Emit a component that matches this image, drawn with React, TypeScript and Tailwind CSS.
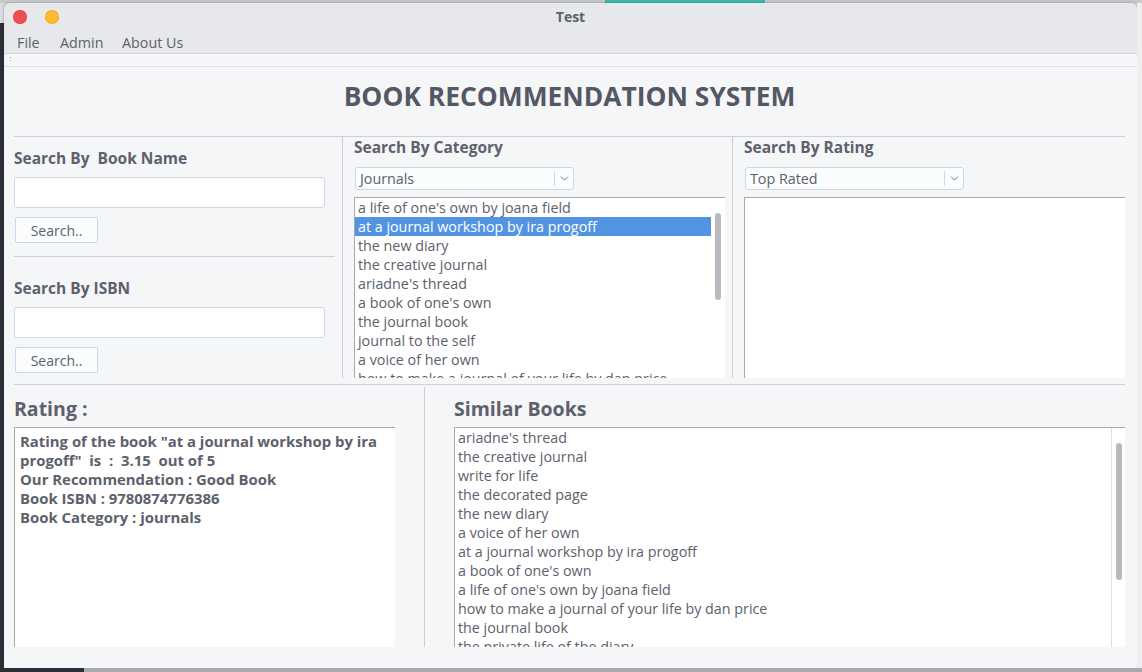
import { ChevronDown } from "lucide-react";

const categoryBooks = [
  "a life of one's own by joana field",
  "at a journal workshop by ira progoff",
  "the new diary",
  "the creative journal",
  "ariadne's thread",
  "a book of one's own",
  "the journal book",
  "journal to the self",
  "a voice of her own",
  "how to make a journal of your life by dan price",
];

const similarBooks = [
  "ariadne's thread",
  "the creative journal",
  "write for life",
  "the decorated page",
  "the new diary",
  "a voice of her own",
  "at a journal workshop by ira progoff",
  "a book of one's own",
  "a life of one's own by joana field",
  "how to make a journal of your life by dan price",
  "the journal book",
  "the private life of the diary",
];

function Heading({ children }: { children: React.ReactNode }) {
  return <div className="text-[15.5px] leading-[20px] font-bold text-[#5c616c] whitespace-pre">{children}</div>;
}

function SearchBox({ label, first }: { label: string; first?: boolean }) {
  return (
    <div className={first ? "flex flex-col pt-[11px]" : "flex flex-col pt-[21px]"}>
      <Heading>{label}</Heading>
      <div className="mt-[9px] h-[31px] w-[311px] rounded-[3px] border border-[#cfd6e6] bg-white" />
      <button className="mt-[9px] ml-[1px] flex h-[26px] w-[83px] items-center justify-center rounded-[2px] border border-[#cfd6e6] bg-[#fbfcfc] text-[14px] text-[#5c616c]">
        Search..
      </button>
    </div>
  );
}

function Combo({ value }: { value: string }) {
  return (
    <div className="mt-[10px] ml-[1px] flex h-[23px] w-[219px] items-center rounded-[3px] border border-[#cfd6e6] bg-[#fbfcfc]">
      <span className="flex-1 pl-[4px] pt-[1px] text-[14.3px] leading-[20px] text-[#5c616c]">{value}</span>
      <div className="h-[15px] w-px bg-[#cfd6e6]" />
      <div className="flex w-[18px] items-center justify-center">
        <ChevronDown size={13} strokeWidth={1.6} className="text-[#5c616c]" />
      </div>
    </div>
  );
}

function Scrollbar({ height, line }: { height: number; line?: boolean }) {
  return (
    <div className={line ? "flex w-[14px] justify-center border-l border-[#dedfe2] pt-[15px]" : "flex w-[14px] justify-center pt-[15px]"}>
      <div className="w-[6px] rounded-full bg-[#b8babf]" style={{ height }} />
    </div>
  );
}

function App() {
  return (
    <div className="flex h-[672px] w-[1142px] flex-col overflow-hidden bg-[#d0d1d3] font-['Open_Sans',sans-serif]">
      {/* desktop strip above the window */}
      <div className="flex h-[3px]">
        <div className="w-[605px] bg-[#c9cacc]" />
        <div className="w-[160px] bg-[#3dbcab]" />
        <div className="flex-1 bg-[#c9cacc]" />
      </div>

      <div className="flex h-[665px]">
        <div className="flex w-[4px] flex-col">
          <div className="h-[20px] bg-[#dcdde0]" />
          <div className="flex-1 bg-[#2c2f38]" />
        </div>

        {/* window */}
        <div className="flex w-[1133px] flex-col overflow-hidden rounded-t-[6px] shadow-[0_0_3px_rgba(0,0,0,0.35)]">
          <div className="grid h-[28px] grid-cols-[1fr_auto_1fr] items-center bg-[#e7e8eb]">
            <div className="flex items-center gap-[18px] pl-[9px]">
              <div className="h-[14px] w-[14px] rounded-full bg-[#ef4e56] shadow-[inset_0_0_0_1px_rgba(200,40,50,0.35)]" />
              <div className="h-[14px] w-[14px] rounded-full bg-[#fbbd2e] shadow-[inset_0_0_0_1px_rgba(210,150,20,0.35)]" />
            </div>
            <div className="pb-[2px] text-[14px] font-bold text-[#5c616c]">Test</div>
            <div />
          </div>
          <div className="flex h-[23px] items-center border-b border-[#d3d4d8] bg-[#e7e8eb] pl-[13px] pt-[2px] text-[14.3px] text-[#5c616c]">
            <span className="w-[43px]">File</span>
            <span className="w-[62px]">Admin</span>
            <span>About Us</span>
          </div>
          <div className="flex h-[13px] flex-col gap-[2px] border-b border-[#dfe0e3] bg-[#f5f6f7] pl-[6px] pt-[3px]">
            <div className="h-px w-px bg-[#a8aab0]" />
            <div className="h-px w-px bg-[#a8aab0]" />
          </div>

          {/* content */}
          <div className="flex flex-1 flex-col bg-[#f5f6f7] pl-[10px] pr-[12px]">
            <div className="flex h-[69px] items-center justify-center pb-[9px] text-[26.4px] font-bold text-[#545864]">
              BOOK RECOMMENDATION SYSTEM
            </div>
            <div className="h-px bg-[#cfd0d3]" />

            <div className="flex h-[241px] overflow-hidden">
              <div className="flex w-[321px] flex-col">
                <SearchBox label="Search By  Book Name" first />
                <div className="mt-[13px] h-px bg-[#cfd0d3]" />
                <SearchBox label="Search By ISBN" />
              </div>
              <div className="ml-[7px] w-px bg-[#cdced2]" />

              <div className="ml-[11px] flex w-[371px] flex-col">
                <Heading>Search By Category</Heading>
                <Combo value="Journals" />
                <div className="mt-[7px] flex flex-1 border-t border-l border-[#a8a9ad] bg-white">
                  <div className="flex-1 text-[14.3px] leading-[19px] text-[#5c616c]">
                    {categoryBooks.map((b, i) => (
                      <div key={b} className={i === 1 ? "whitespace-nowrap bg-[#5294e2] pl-[3px] text-white" : "whitespace-nowrap pl-[3px]"}>
                        {b}
                      </div>
                    ))}
                  </div>
                  <Scrollbar height={87} />
                </div>
              </div>
              <div className="ml-[7px] w-px bg-[#cdced2]" />

              <div className="ml-[11px] flex flex-1 flex-col">
                <Heading>Search By Rating</Heading>
                <Combo value="Top Rated" />
                <div className="mt-[7px] flex-1 border-t border-l border-[#a8a9ad] bg-white" />
              </div>
            </div>

            <div className="mt-[6px] h-px bg-[#cfd0d3]" />

            <div className="flex h-[262px]">
              <div className="flex w-[381px] flex-col pt-[12px]">
                <div className="text-[19.5px] leading-[24px] font-bold text-[#5c616c]">Rating :</div>
                <div className="mt-[6px] flex-1 border-t border-l border-[#a8a9ad] bg-white pl-[5px] pt-[4px] text-[14.9px] leading-[19px] font-bold text-[#5c616c]">
                  <div className="whitespace-pre">Rating of the book "at a journal workshop by ira</div>
                  <div className="whitespace-pre">progoff"  is  :  3.15  out of 5</div>
                  <div>Our Recommendation : Good Book</div>
                  <div>Book ISBN : 9780874776386</div>
                  <div>Book Category : journals</div>
                </div>
              </div>
              <div className="mt-[2px] ml-[29px] w-px bg-[#cdced2]" />

              <div className="ml-[29px] flex flex-1 flex-col pt-[12px]">
                <div className="text-[19.5px] leading-[24px] font-bold text-[#5c616c]">Similar Books</div>
                <div className="mt-[6px] flex flex-1 overflow-hidden border-t border-l border-[#a8a9ad] bg-white">
                  <div className="flex-1 pl-[3px] text-[14.3px] leading-[19px] text-[#5c616c]">
                    {similarBooks.map((b) => (
                      <div key={b} className="whitespace-nowrap">
                        {b}
                      </div>
                    ))}
                  </div>
                  <Scrollbar height={137} line />
                </div>
              </div>
            </div>
            <div className="h-[21px]" />
          </div>
        </div>

        <div className="flex-1 bg-[#eeeff1]" />
      </div>

      <div className="flex h-[4px]">
        <div className="w-[84px] bg-[#2b2e36]" />
        <div className="flex-1 bg-[#a9aaad]" />
      </div>
    </div>
  );
}

export default App;
